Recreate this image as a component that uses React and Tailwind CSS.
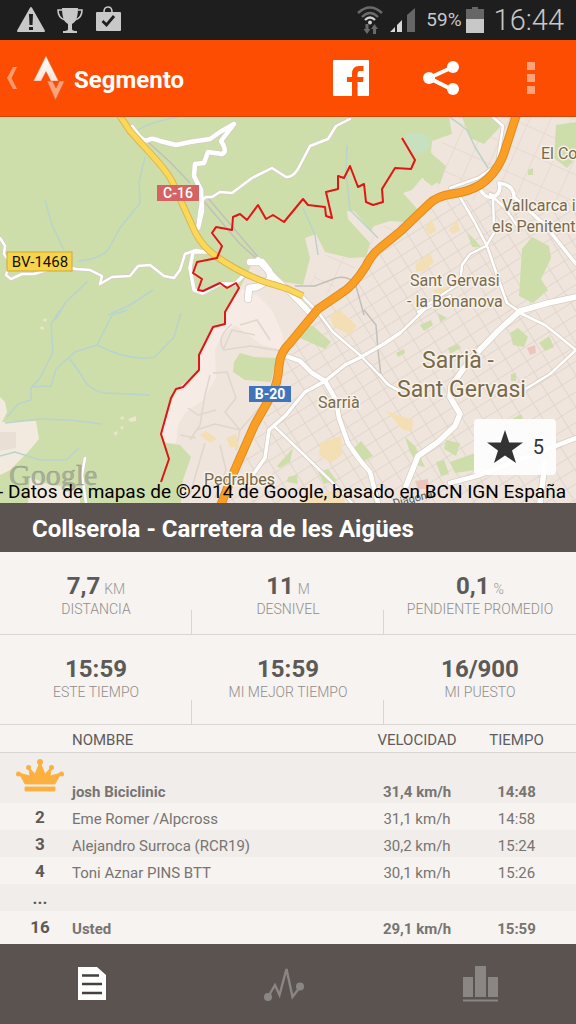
import React, { useState } from 'react';

const stats = [
  [
    { value: '7,7', unit: 'KM', label: 'DISTANCIA' },
    { value: '11', unit: 'M', label: 'DESNIVEL' },
    { value: '0,1', unit: '%', label: 'PENDIENTE PROMEDIO' },
  ],
  [
    { value: '15:59', label: 'ESTE TIEMPO' },
    { value: '15:59', label: 'MI MEJOR TIEMPO' },
    { value: '16/900', label: 'MI PUESTO' },
  ],
];

const leaders = [
  { rank: '2', name: 'Eme Romer /Alpcross', speed: '31,1 km/h', time: '14:58' },
  { rank: '3', name: 'Alejandro Surroca (RCR19)', speed: '30,2 km/h', time: '15:24' },
  { rank: '4', name: 'Toni Aznar PINS BTT', speed: '30,1 km/h', time: '15:26' },
];

// map data, in the units of the map's viewBox
const urban = 'M449 117 L452 134 L432 141 L431 153 L446 166 L440 184 L422 178 L412 190 L403 193 L419 211 L405 222 L390 221 L374 226 L371 231 L354 211 L347 211 L348 219 L370 243 L366 257 L350 258 L325 252 L316 234 L305 238 L310 258 L303 285 L285 282 L255 258 L240 288 L238 290 L225 314 L225 324 L213 328 L199 356 L199 371 L176 390 L161 434 L166 443 L180 445 L191 457 L183 480 L181 503 L576 503 L576 117 Z';
const slope = 'M239 288 L258 296 L272 310 L283 335 L284 350 L262 345 L235 325 L222 335 L215 350 L216 378 L203 400 L186 412 L178 425 L176 443 L166 443 L161 434 L176 390 L199 371 L199 356 L213 328 L225 324 L225 314 Z';
const c16 = 'M118 113 L130 131 L150 153 Q166 170 172 181 L186 212 L196 234 Q204 248 217 257 Q240 273 265 282 L288 289 L303 296';
const b20 = 'M517 113 L506 147 Q499 172 480 185 Q468 192 452 194 Q437 196 429 204 L401 231 L380 248 Q372 254 366 266 Q353 287 340 294 L318 309 L290 343 Q280 352 279 366 Q278 384 271 396 L255 424 Q246 444 233 474 L220 507';
const route = '402,138 415,160 411,169 395,168 382,189 383,202 373,205 366,202 364,184 358,187 350,166 344,178 338,176 338,189 326,192 332,218 326,216 325,207 308,205 303,199 284,222 273,215 266,219 258,205 247,220 240,214 233,217 232,230 216,227 212,233 222,246 217,258 197,262 193,273 202,279 198,290 203,291 220,283 227,288 236,283 239,288 225,312 225,324 213,327 199,355 199,370 183,387 176,389 171,398 161,434 169,459 161,482';

const streams = [
  'M178 117 Q150 122 138 130',
  'M145 157 L139 182 L140 203 L120 228 L108 250 Q100 259 78 261',
  'M45 200 L52 225 L64 250',
  'M88 281 L66 302 L55 320',
  'M153 290 L130 305 L108 315',
  'M60 310 L51 324 L53 352 L40 378 L31 388 L31 400 L18 404 L7 417',
  'M127 310 L112 315 L97 345 L75 352 L56 369 L51 386 L33 387',
  'M97 345 Q130 362 155 357 L174 337 L181 313',
  'M70 359 L82 376 Q88 390 105 393 L150 395',
  'M5 423 L40 419 L70 420 L102 424',
  'M0 456 L15 452 L40 460 L66 460 L79 448',
  'M347 145 L346 170 L350 210 L378 238',
  'M303 208 L315 235 L318 255',
  'M450 117 L467 130 L475 147 L488 168',
];

const whiteRoads = [
  { d: 'M132 127 Q143 143 148 140 Q152 137 160 141 L176 145 L190 142 L210 139 L220 132 L234 124 L221 141 Q228 152 222 154 L208 152 L204 163 L195 164 L194 176 L201 190 L202 211 L198 228', w: 4 },
  { d: 'M198 228 Q199 200 206 197 L212 197 L220 192 L232 193 L252 178 L272 168 L286 177 Q292 178 298 169 L310 146 L328 139 L336 126 L350 119', w: 2 },
  { d: 'M0 238 L5 246 L4 254 L10 262 L6 275 L11 279 L22 274 L34 274 L60 266 L76 269 L90 270 L102 276 L100 284 L112 277 L130 276 L138 266 L150 265 L164 276 L174 278 L180 270 L185 254 L196 250 L207 252', w: 2 },
  { d: 'M207 252 L193 252 L190 268 L194 290 L203 293 L220 284 L235 284 L243 276', w: 3 },
  { d: 'M250 262 L262 262 L269 271 L271 279 L257 287 L249 288 L248 299', w: 6 },
  { d: 'M258 260 L275 278 L291 293 L312 315', w: 5 },
  { d: 'M303 297 L318 312 L333 332 L361 356 L390 386 L400 391', w: 2 },
  { d: 'M286 356 L300 361 L312 373 L325 381 L336 400 L339 418 L348 443 Q358 459 370 472 L378 503', w: 4 },
  { d: 'M400 333 L382 345 L361 357 L345 365 L325 381 L305 392 L285 416 L269 430 L265 458 L252 476', w: 3 },
  { d: 'M275 427 L300 451 L330 480 L352 503', w: 2 },
  { d: 'M400 333 L424 310 L450 296', w: 2 },
  { d: 'M460 197 L474 221 L487 246 L497 275 L507 303 L520 312', w: 2 },
  { d: 'M493 195 L494 233 L486 246 L470 254 L462 265 L460 284', w: 2 },
  { d: 'M576 297 L548 303 L520 311 L498 331 L470 360 L451 386 L450 397 L460 414 L455 426 L438 442 L418 456 L406 486', w: 5 },
  { d: 'M460 283 L440 296 L418 312', w: 2 },
  { d: 'M480 189 Q485 199 494 197 Q502 192 499 183 Q514 185 514 197 L527 209 L545 225 L560 244 L576 264', w: 3 },
  { d: 'M490 194 L505 208 L520 230 M493 117 L503 126 L497 165 L478 178 L450 188', w: 2 },
  { d: 'M518 312 L545 325 L560 337 L576 350 L550 374 L524 390', w: 2 },
  { d: 'M450 483 L480 475 L576 438', w: 4 },
  { d: 'M545 463 L540 503', w: 5 },
  { d: 'M380 375 L387 384 L400 391 M85 458 L82 475 L86 503', w: 2 },
];

const parks = [
  'M234 362 L240 353 L254 357 L276 358 L274 370 L271 382 L245 380 L233 372 Z',
  'M295 337 L303 325 L313 326 L331 342 L325 349 L300 338 Z',
  'M522 249 L532 237 L549 246 L551 258 L541 279 L548 290 L533 303 L519 296 Z',
  'M556 125 L576 122 L576 158 L567 168 L554 158 Z',
  'M462 117 L496 117 L500 127 L484 144 L470 138 Z',
  'M423 172 L435 169 L440 180 L432 186 L424 180 Z',
  'M510 333 L518 328 L528 337 L524 347 L513 345 Z',
  'M539 343 L549 336 L554 347 L545 351 Z',
  'M352 450 L361 441 L373 456 L360 463 Z',
  'M467 232 L475 240 L481 247 L472 247 Z',
  'M405 437 L415 446 L425 467 L419 466 L410 452 Z',
  'M446 440 L460 443 L456 456 L444 449 Z',
  'M277 466 L293 448 L290 462 L280 468 Z',
  'M318 472 L328 469 L337 481 L324 484 Z',
  'M288 477 L297 475 L298 484 L287 482 Z',
  'M420 325 L431 320 L433 325 L424 331 Z M438 313 L447 318 L440 322 Z M448 348 L458 344 L461 348 L450 354 Z M396 353 L404 349 L405 353 L398 357 Z',
  'M511 374 L516 373 L516 381 L511 381 Z M528 170 L533 168 L533 175 L528 175 Z M512 419 L521 414 L523 421 L514 422 Z',
  'M450 462 L475 453 L475 470 L455 473 Z M436 462 L444 460 L449 474 L441 476 Z',
];

const blocks = [
  'M330 316 L340 310 L357 326 L349 335 L333 326 Z',
  'M320 443 L341 436 L342 455 L331 463 L319 455 Z',
  'M416 264 L430 253 L434 262 L424 271 L416 272 Z',
  'M425 228 L432 219 L436 231 L430 235 Z M449 230 L457 219 L460 231 L452 234 Z',
  'M386 411 L413 420 L412 432 L402 429 Z',
  'M200 435 L206 431 L217 439 L210 443 Z M226 438 L236 434 L239 448 L230 447 Z',
  'M300 500 L340 489 L345 503 L300 503 Z M433 290 L450 286 L446 294 L436 296 Z',
];

function MapLabel({ x, y, size, children }) {
  return (
    <text x={x} y={y} fontSize={size} fill="#786a4a" stroke="#f8f2ea" strokeWidth="3" strokeLinejoin="round" paintOrder="stroke">
      {children}
    </text>
  );
}

function SegmentMap() {
  return (
    <svg viewBox="0 117 576 386" className="block w-full font-['Roboto',sans-serif]" role="img" aria-label="Mapa del segmento">
      <defs>
        <pattern id="gridA" width="17" height="13" patternUnits="userSpaceOnUse" patternTransform="rotate(-32)">
          <path d="M0 0 H17 M0 0 V13" stroke="#ddd3ca" strokeWidth="1.6" fill="none" />
        </pattern>
        <pattern id="gridB" width="19" height="25" patternUnits="userSpaceOnUse" patternTransform="rotate(24)">
          <path d="M0 0 H19 M0 0 V25" stroke="#ddd2c8" strokeWidth="1.4" fill="none" />
        </pattern>
      </defs>
      <rect y="117" width="576" height="386" fill="#cddeab" />
      <path d={urban} fill="#efe5dc" />
      <path d="M320 310 L400 235 L440 200 L576 200 L576 503 L222 503 L275 400 L285 350 Z" fill="url(#gridA)" />
      <path d="M452 134 L449 117 L576 117 L576 210 L500 200 L440 200 L431 153 Z M405 222 L390 221 L350 258 L325 255 L310 285 L320 300 L380 245 Z" fill="url(#gridB)" opacity=".7" />
      <path d={slope} fill="#f6ece5" />
      <g fill="none" stroke="#e0d6cc" strokeWidth="1.5">
        <path d="M232 324 Q215 338 224 350 L250 346 L282 351 M240 325 L257 320 L270 340 M223 350 L232 330 L255 335" />
        <path d="M210 375 L205 395 L200 425 L190 440 M213 373 L227 372 L236 398 L225 412 L240 430 L262 405 M196 430 L215 424 L240 430 L236 450 M205 443 L197 470 L190 495 M220 445 L226 470 L215 498 M188 408 L198 415 L216 410 M180 435 L196 438" />
      </g>
      <path d="M0 397 L5 402 L7 412 L2 422 L36 421 L39 439 L28 452 L10 470 L0 475 Z M30 477 L50 485 L80 488 L80 503 L28 503 Z" fill="#f3eadf" />
      <path d="M0 432 L16 432 L16 448 L0 451 Z" fill="#eadfd4" />
      <path d="M405 134 L418 132 L430 137 L428 150 L416 154 L407 146 Z" fill="#c7e0c0" />
      <g fill="#cddeab">{parks.map((d) => <path key={d} d={d} />)}</g>
      <g fill="#f4dfb5">{blocks.map((d) => <path key={d} d={d} />)}</g>
      <path d="M527 348 L535 345 L536 353 L530 355 Z M415 481 L428 479 L429 489 L418 489 Z" fill="#eec5bd" />
      <g fill="#eee4cf">
        <path d="M128 419 L136 416 L136 421 L130 422 Z M119 418 L124 416 L123 420 Z M120 427 L124 426 L122 430 Z M113 433 L118 431 L116 436 Z M42 320 L47 318 L46 322 Z M39 328 L43 326 L44 330 Z" />
      </g>
      <g fill="none" stroke="#b9d3cd" strokeWidth="1.5" strokeLinejoin="round">
        {streams.map((d) => <path key={d} d={d} />)}
      </g>
      <g fill="none" stroke="#c1bfbd" strokeWidth="1.5">
        <path d="M148 142 L170 162 L190 183 M202 199 L240 244 L265 266 M208 198 L258 257 L275 275" />
        <path d="M295 286 L315 286 L336 278 Q350 275 356 286 L364 315 M364 310 L376 325 L378 350 L381 376" />
      </g>

      <g fill="none" stroke="#d6cdc3" strokeLinejoin="round" strokeLinecap="round">
        {whiteRoads.map(({ d, w }) => <path key={d} d={d} strokeWidth={w + 2} />)}
      </g>
      <g fill="none" stroke="#fff" strokeLinejoin="round" strokeLinecap="round">
        {whiteRoads.map(({ d, w }) => <path key={d} d={d} strokeWidth={w + 0.5} />)}
      </g>
      <path d={c16} fill="none" stroke="#dcb454" strokeWidth="7" />
      <path d={c16} fill="none" stroke="#fcd858" strokeWidth="5" />
      <path d={b20} fill="none" stroke="#d98d2c" strokeWidth="9" />
      <path d={b20} fill="none" stroke="#fb9f24" strokeWidth="7" />

      <rect x="157" y="185" width="42" height="16" fill="#d56364" />
      <text x="178" y="198" textAnchor="middle" fontSize="14" fontWeight="500" fill="#fff">C-16</text>
      <rect x="7" y="252" width="65" height="19" fill="#f8d548" stroke="#c8a93c" />
      <text x="40" y="267" textAnchor="middle" fontSize="15" fill="#111">BV-1468</text>
      <rect x="249" y="386" width="42" height="16" fill="#3f74bd" />
      <text x="270" y="399" textAnchor="middle" fontSize="14" fontWeight="700" fill="#fff">B-20</text>

      <MapLabel x="541" y="159" size="16">El Co</MapLabel>
      <MapLabel x="502" y="211" size="16">Vallcarca i</MapLabel>
      <MapLabel x="492" y="232" size="16">els Penitent</MapLabel>
      <MapLabel x="410" y="286" size="16">Sant Gervasi</MapLabel>
      <MapLabel x="407" y="307" size="16">- la Bonanova</MapLabel>
      <MapLabel x="422" y="368" size="23">Sarrià -</MapLabel>
      <MapLabel x="397" y="397" size="23">Sant Gervasi</MapLabel>
      <MapLabel x="318" y="408" size="16">Sarrià</MapLabel>
      <MapLabel x="204" y="485" size="16">Pedralbes</MapLabel>
      <text x="394" y="507" fontSize="11" fill="#555" transform="rotate(-14 394 507)">Diagonal</text>

      <polyline points={route} fill="none" stroke="#e01515" strokeWidth="2" strokeLinejoin="round" />

      <text x="9" y="485" fontSize="30" fill="#a9b19a" stroke="#8f9582" strokeWidth=".4" className="font-['Liberation_Serif',serif]">Google</text>
      <text x="566" y="498" textAnchor="end" fontSize="19" fill="#000">- Datos de mapas de ©2014 de Google, basado en BCN IGN España</text>
    </svg>
  );
}

function StatusBar() {
  return (
    <div className="flex h-10 items-center bg-[#1e1e1e] pr-3 pl-4 text-[#c8c8c8]">
      <svg width="30" height="28" viewBox="0 0 30 28" fill="#c8c8c8">
        <path d="M15 2 L28 25 H2 Z" stroke="#c8c8c8" strokeWidth="2" strokeLinejoin="round" />
        <path d="M13 8 H17 L16.500 19 H13.500 Z M13 21 H17 V24 H13 Z" fill="#1e1e1e" />
      </svg>
      <svg className="ml-2.5" width="28" height="28" viewBox="0 0 28 28" fill="#c8c8c8">
        <path d="M6 2 H22 C22 11 20 16 16 18 V23 Q16 25 21 25 V27 H7 V25 Q12 25 12 23 V18 C8 16 6 11 6 2 Z" />
        <path d="M6 4 H2 Q2 12 9 14 M22 4 H26 Q26 12 19 14" fill="none" stroke="#c8c8c8" strokeWidth="1.600" />
      </svg>
      <svg className="ml-2.5" width="28" height="28" viewBox="0 0 28 28">
        <path d="M10 8 V6 Q10 1 14 1 Q18 1 18 6 V8" fill="none" stroke="#c8c8c8" strokeWidth="1.600" />
        <rect x="2" y="6" width="25" height="19" rx="1" fill="#c8c8c8" />
        <path d="M8.500 15 L12.500 19 L20 10" fill="none" stroke="#1e1e1e" strokeWidth="2.800" />
      </svg>
      <div className="ml-auto flex items-center">
        <svg width="28" height="30" viewBox="0 0 28 30" fill="none" strokeWidth="2.400">
          <path d="M2 8 Q14 -3 26 8 M6 12 Q14 4 22 12" stroke="#6a6a6a" />
          <path d="M9 15 Q14 10 19 15" stroke="#d0d0d0" />
          <circle cx="14" cy="17.500" r="2" fill="#d0d0d0" />
          <path d="M9.500 19 H12.500 V24 H14.500 L11 29 L7.500 24 H9.500 Z M17 29 V24 H15 L18.500 19 L22 24 H20 V29 Z" fill="#6a6a6a" />
        </svg>
        <svg className="ml-1.5" width="26" height="26" viewBox="0 0 26 26">
          <path d="M25 1 V25 H17 V8 Z" fill="#666" />
          <path d="M0 25 L5 20 V25 Z M7 25 V18 L12 13 V25 Z" fill="#d8d8d8" />
        </svg>
        <span className="ml-2.5 text-[19px] leading-6">59%</span>
        <svg className="ml-1" width="18" height="26" viewBox="0 0 18 26">
          <path d="M6 0 H12 V2 H18 V13 H0 V2 H6 Z" fill="#666" />
          <rect y="12" width="18" height="14" fill="#c8c8c8" />
        </svg>
        <span className="ml-2.5 text-[29px] leading-8 font-light">16:44</span>
      </div>
    </div>
  );
}

function Header() {
  return (
    <header className="flex h-[77px] items-center border-b border-[#d8430a] bg-[#fd4d02]">
      <button type="button" aria-label="Volver" className="flex items-center pl-1.5">
        <svg width="12" height="24" viewBox="0 0 12 24">
          <path d="M7 1 H11 L5.500 12 L11 23 H7 L1 12 Z" fill="#ff9a6e" />
        </svg>
        <svg className="ml-3.5" width="34" height="46" viewBox="0 0 34 46">
          <defs>
            <linearGradient id="logoTop" x1="0" y1="0" x2="0" y2="1">
              <stop offset="0" stopColor="#fff" />
              <stop offset="1" stopColor="#ffe3d8" />
            </linearGradient>
          </defs>
          <path d="M15 26 H20.500 L24 33 L27.500 26 H32.500 L23.500 45 Z" fill="#ffa27a" stroke="#c9643a" strokeWidth=".6" />
          <path d="M14 1 L26.500 26 H19 L14 16.500 L9 26 H1.500 Z" fill="url(#logoTop)" stroke="#d9662f" strokeWidth=".4" />
        </svg>
      </button>
      <h1 className="ml-2 pt-1 text-2xl font-bold text-white">Segmento</h1>
      <div className="ml-auto flex">
        <button type="button" aria-label="Facebook" className="flex w-[90px] items-center justify-center">
          <svg width="36" height="36" viewBox="0 0 36 36">
            <rect width="36" height="36" rx="1" fill="#fff" />
            <path d="M19 36 V22 H14 V17 H19 V14 Q19 6 26 6 H30.500 V11 H27 Q24.500 11 24.500 14 V17 H30.500 L30 22 H24.500 V36 Z" fill="#fd4d02" />
          </svg>
        </button>
        <button type="button" aria-label="Compartir" className="flex w-[90px] items-center justify-center">
          <svg width="36" height="36" viewBox="0 0 36 36" fill="#fff">
            <path d="M30 7 L6 18 L30 30" fill="none" stroke="#fff" strokeWidth="4" />
            <circle cx="6" cy="18" r="6" />
            <circle cx="30" cy="7" r="6" />
            <circle cx="30" cy="29" r="6" />
          </svg>
        </button>
        <button type="button" aria-label="Más opciones" className="flex w-[90px] flex-col items-center justify-center gap-1">
          <span className="size-2 bg-[#ffa27a]" />
          <span className="size-2 bg-[#ffa27a]" />
          <span className="size-2 bg-[#ffa27a]" />
        </button>
      </div>
    </header>
  );
}

function Stat({ value, unit, label, divider }) {
  return (
    <div className="relative flex-1 text-center">
      <div className="text-2xl leading-7 font-bold text-[#5c5a58]">
        {value}
        {unit && <span className="ml-1 text-sm font-light text-[#999]">{unit}</span>}
      </div>
      <div className="text-sm leading-[18px] font-light text-[#8f8d8b]">{label}</div>
      {divider && <span className="absolute right-0 bottom-0 h-6 w-px bg-[#d8d5d2]" />}
    </div>
  );
}

function Leaderboard() {
  return (
    <table className="w-full table-fixed text-[15px] text-[#777472]">
      <colgroup>
        <col className="w-[72px]" />
        <col />
        <col className="w-[100px]" />
        <col className="w-[109px]" />
      </colgroup>
      <thead>
        <tr className="h-[27px] border-b border-[#d8d5d2] leading-5 text-[#5f5d5b]">
          <th aria-label="Puesto" />
          <th className="pt-1 text-left font-normal">NOMBRE</th>
          <th className="pt-1 font-normal">VELOCIDAD</th>
          <th className="pt-1 pr-2.5 font-normal">TIEMPO</th>
        </tr>
      </thead>
      <tbody className="text-center leading-5">
        <tr className="h-[51px] bg-[#f1edea] font-bold">
          <td className="pt-1.5 pl-2 align-top">
            <svg className="mx-auto" width="48" height="34" viewBox="0 0 48 34" fill="#fbb040" role="img" aria-label="1">
              <path d="M9 25 L3 14 L14 17 L12.500 8 L19 15 L24 3 L29 15 L35.500 8 L34 17 L45 14 L39 25 Z M9 28 H39 V32 H9 Z" stroke="#fbb040" strokeWidth=".8" strokeLinejoin="round" />
              <circle cx="2.500" cy="15" r="2.500" />
              <circle cx="12.500" cy="8.500" r="2.500" />
              <circle cx="24" cy="3" r="3" />
              <circle cx="35.500" cy="8.500" r="2.500" />
              <circle cx="45.500" cy="15" r="2.500" />
            </svg>
          </td>
          <td className="pb-px text-left align-bottom">josh Biciclinic</td>
          <td className="pb-px align-bottom">31,4 km/h</td>
          <td className="pr-2.5 pb-px align-bottom">14:48</td>
        </tr>
        {leaders.map((row) => (
          <tr key={row.rank} className="h-[27px] even:bg-[#f6f3f0] odd:bg-[#f1edea]">
            <td className="pl-2 text-[17px] leading-6 font-bold text-[#5c5a58]">{row.rank}</td>
            <td className="pt-1 text-left">{row.name}</td>
            <td className="pt-1">{row.speed}</td>
            <td className="pt-1 pr-2.5">{row.time}</td>
          </tr>
        ))}
        <tr className="h-[27px] bg-[#f1edea]">
          <td className="pl-2 text-[17px] leading-6 font-bold text-[#5c5a58]">...</td>
          <td colSpan="3" />
        </tr>
        <tr className="h-8 font-bold">
          <td className="pl-2 text-[17px] leading-6 text-[#5c5a58]">16</td>
          <td className="pt-1 text-left">Usted</td>
          <td className="pt-1">29,1 km/h</td>
          <td className="pt-1 pr-2.5">15:59</td>
        </tr>
      </tbody>
    </table>
  );
}

function BottomNav() {
  return (
    <nav className="flex h-20 items-center bg-[#5a534f]">
      <button type="button" aria-label="Resumen" className="flex w-[32%] justify-center">
        <svg width="28" height="36" viewBox="0 0 28 36">
          <path d="M0 1 H19 L28 9 V34 H0 Z" fill="#fff" />
          <path d="M4 9.500 H21 M4 18 H24 M4 27 H24" stroke="#45403d" strokeWidth="2.600" />
        </svg>
      </button>
      <button type="button" aria-label="Análisis" className="flex flex-1 justify-center">
        <svg width="40" height="36" viewBox="0 0 40 36" fill="none" stroke="#8a8684">
          <path d="M4 31 L11 19 L15.500 29 L22.500 3 L28.500 31 L36 21" strokeWidth="2.400" />
          <circle cx="4" cy="31" r="4" fill="#8a8684" stroke="none" />
          <circle cx="36" cy="20.500" r="4" fill="#8a8684" stroke="none" />
        </svg>
      </button>
      <button type="button" aria-label="Clasificación" className="flex w-1/3 justify-center">
        <svg width="35" height="36" viewBox="0 0 35 36" fill="#8a8684">
          <path d="M0 11 H10 V31 H0 Z M12 0 H23 V31 H12 Z M25 11 H35 V31 H25 Z M0 33.500 H35 V35.500 H0 Z" />
        </svg>
      </button>
    </nav>
  );
}

function App() {
  const [starred, setStarred] = useState(true);

  return (
    <div className="flex min-h-screen flex-col bg-[#f6f3f0] font-['Roboto',sans-serif]">
      <StatusBar />
      <Header />
      <div className="relative">
        <SegmentMap />
        <button
          type="button"
          onClick={() => setStarred(!starred)}
          className="absolute right-5 bottom-7 flex h-14 w-[82px] items-center justify-between rounded-sm bg-white/90 px-3 text-xl text-[#333]"
        >
          <svg width="38" height="34" viewBox="0 0 36 34">
            <path d="M18 0 L22.200 12.500 H36 L25 20.500 L29 33 L18 25.500 L7 33 L11 20.500 L0 12.500 H13.800 Z" fill={starred ? '#333' : '#aaa'} />
          </svg>
          5
        </button>
      </div>
      <h2 className="bg-[#5a534f] px-8 pt-2.5 pb-1.5 text-2xl leading-[33px] font-bold text-white">Collserola - Carretera de les Aigües</h2>
      <section>
        {stats.map((row, i) => (
          <div key={i} className={`flex border-b border-[#d8d5d2] pt-5 ${i === 0 ? 'h-[83px]' : 'h-[90px]'}`}>
            {row.map((stat, j) => <Stat key={stat.label} {...stat} divider={j < 2} />)}
          </div>
        ))}
      </section>
      <Leaderboard />
      <div className="mt-auto">
        <BottomNav />
      </div>
    </div>
  );
}

export default App;
